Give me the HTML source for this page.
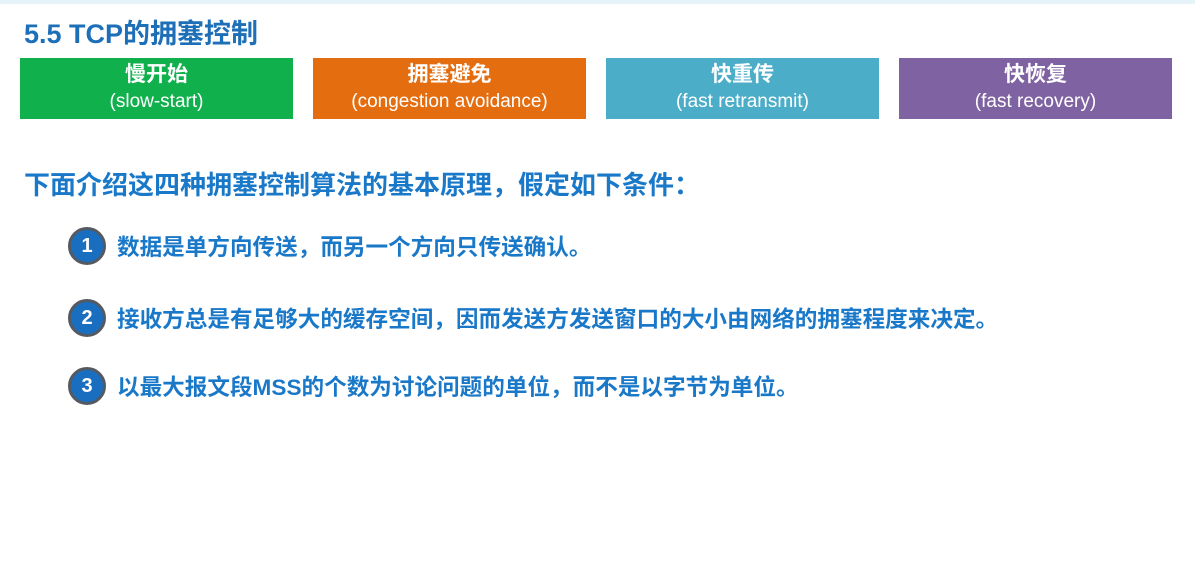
<!DOCTYPE html><html><head><meta charset="utf-8"><style>
body{margin:0;width:1195px;height:577px;background:#fff;position:relative;overflow:hidden;font-family:"Liberation Sans","Noto Sans CJK SC",sans-serif}
.top{position:absolute;left:0;top:0;width:1195px;height:4px;background:#e6f3f8}
.t{position:absolute;left:24px;top:12px;font-size:27px;font-weight:bold;color:#1d6fb8}
.b{position:absolute;top:58px;width:273px;height:61px;color:#fff;text-align:center;font-size:19px;line-height:26px;padding-top:4px;box-sizing:border-box}
.b b{font-size:21px}
.h{position:absolute;left:24px;top:165px;font-size:26px;font-weight:bold;color:#1a78c8}
.c{position:absolute;left:68px;width:32px;height:32px;border-radius:50%;background:#1a6ec0;border:3px solid #545a61;color:#fff;font-weight:bold;font-size:20px;text-align:center;line-height:32px}
.l{position:absolute;left:117px;font-size:22.6px;font-weight:bold;color:#1a78c8}
</style></head><body>
<div class="top"></div>
<div class="t">5.5 TCP的拥塞控制</div>
<div class="b" style="left:20px;background:#10b04c"><b>慢开始</b><br>(slow-start)</div>
<div class="b" style="left:313px;background:#e46d10"><b>拥塞避免</b><br>(congestion avoidance)</div>
<div class="b" style="left:606px;background:#4cadc8"><b>快重传</b><br>(fast retransmit)</div>
<div class="b" style="left:899px;background:#7f62a2"><b>快恢复</b><br>(fast recovery)</div>
<div class="h">下面介绍这四种拥塞控制算法的基本原理，假定如下条件：</div>
<div class="c" style="top:227px">1</div><div class="l" style="top:229px">数据是单方向传送，而另一个方向只传送确认。</div>
<div class="c" style="top:299px">2</div><div class="l" style="top:301px">接收方总是有足够大的缓存空间，因而发送方发送窗口的大小由网络的拥塞程度来决定。</div>
<div class="c" style="top:367px">3</div><div class="l" style="top:369px">以最大报文段MSS的个数为讨论问题的单位，而不是以字节为单位。</div>
</body></html>
